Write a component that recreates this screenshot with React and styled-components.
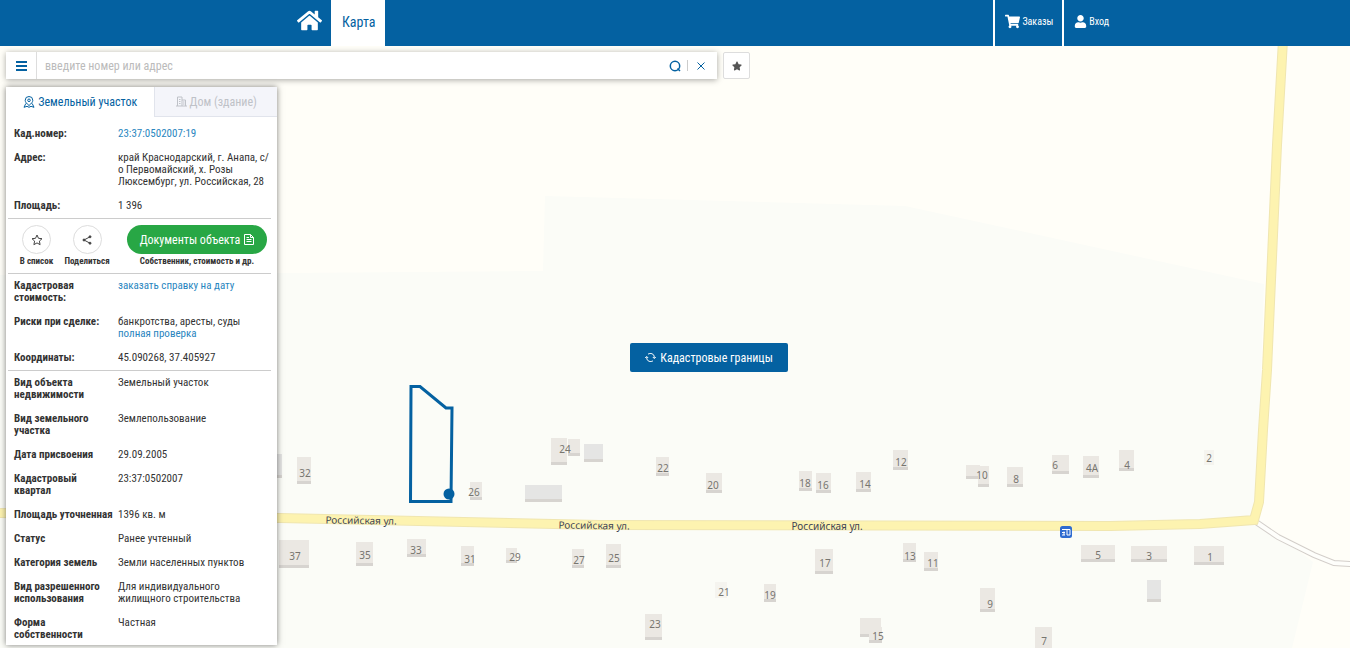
import React from "react";
import styled, { createGlobalStyle } from "styled-components";
import { FaHome, FaShoppingCart, FaUser, FaStar } from "react-icons/fa";

const blue = "#0461a1";
const linkBlue = "#2a86c0";

const GlobalStyle = createGlobalStyle`
  *, *::before, *::after {
    box-sizing: border-box;
  }

  html, body, #root {
    height: 100%;
  }

  body {
    margin: 0;
    overflow: hidden;
    font-family: "Roboto Condensed", "Liberation Sans Narrow", Roboto, sans-serif;
    font-size: 11px;
    line-height: 12px;
    color: #333;
  }

  button, input {
    font: inherit;
  }
`;

const Page = styled.div`
  display: flex;
  flex-direction: column;
  height: 100%;
`;

const Header = styled.header`
  background: ${blue};
`;

const HeaderInner = styled.div`
  display: flex;
  justify-content: space-between;
  height: 46px;
  max-width: 886px;
  margin: 0 auto;
`;

const Nav = styled.nav`
  display: flex;
`;

const HomeLink = styled.a`
  display: flex;
  align-items: center;
  padding: 0 9px 5px 65px;
  color: #fff;
`;

const NavLink = styled.a`
  display: flex;
  align-items: center;
  padding: 0 10px 2px 11px;
  background: #fff;
  color: ${blue};
  font-size: 14px;
  text-decoration: none;
`;

const UserLink = styled.a`
  display: flex;
  align-items: center;
  gap: 2px;
  padding: 0 9px 3px 10px;
  border-left: 2px solid #fff;
  color: #fff;
  font-size: 10px;
  text-decoration: none;
`;

const Main = styled.main`
  position: relative;
  flex: 1;
  min-height: 0;
  padding: 6px;
  background: #fbfcf7;
`;

const MapSvg = styled.svg`
  position: absolute;
  top: 0;
  left: 0;
  width: 100%;
  height: 100%;
  font-family: "Noto Sans", sans-serif;
`;

const SearchRow = styled.div`
  position: relative;
  display: flex;
  gap: 6px;
`;

const SearchForm = styled.form`
  display: flex;
  align-items: center;
  width: 711px;
  height: 27px;
  padding-right: 4px;
  background: #fff;
  box-shadow: 0 1px 6px rgba(0, 0, 0, 0.35);
`;

const SearchInput = styled.input`
  flex: 1;
  min-width: 0;
  height: 100%;
  padding: 0 8px;
  border: 0;
  border-left: 1px solid #ddd;
  outline: 0;
  font-size: 12px;

  &::placeholder {
    color: #bbb;
  }
`;

const IconButton = styled.button`
  display: flex;
  align-items: center;
  justify-content: center;
  width: ${(props) => props.$width || 25}px;
  height: 27px;
  padding: 0;
  border: 0;
  background: #fff;
  color: ${blue};
`;

const Divider = styled.span`
  width: 1px;
  height: 11px;
  background: #ccc;
`;

const FavButton = styled(IconButton)`
  border: 1px solid #ddd;
  border-radius: 2px;
  color: #555;
`;

const Panel = styled.section`
  position: relative;
  width: 271px;
  margin-top: 8px;
  background: #fff;
  box-shadow: 0 0 6px rgba(0, 0, 0, 0.5);
`;

const Tabs = styled.div`
  display: flex;
`;

const Tab = styled.button`
  display: flex;
  align-items: center;
  justify-content: center;
  gap: 3px;
  flex: ${(props) => (props.$active ? "149 1 0" : "122 1 0")};
  height: 30px;
  padding: 0;
  border: 0 solid #e1e4ec;
  border-width: ${(props) => (props.$active ? "0" : "0 0 1px 1px")};
  background: ${(props) => (props.$active ? "#fff" : "#f4f5fa")};
  color: ${(props) => (props.$active ? blue : "#bfc2c8")};
  font-size: 12px;
`;

const PanelBody = styled.div`
  padding: 5px 6px 0 2px;
`;

const Table = styled.table`
  width: 100%;
  border-collapse: collapse;
  table-layout: fixed;

  & + & {
    border-top: 1px solid #ccc;
  }

  &:last-child tr:last-child > * {
    padding-bottom: 4px;
  }
`;

const Label = styled.th`
  width: 110px;
  padding: 6px 4px 6px 6px;
  font-weight: 700;
  text-align: left;
  vertical-align: top;
`;

const Value = styled.td`
  padding: 6px 0;
  vertical-align: top;
`;

const TextLink = styled.a`
  color: ${linkBlue};
  text-decoration: none;
`;

const Actions = styled.div`
  display: flex;
  padding: 6px 4px 6px 6px;
  border: solid #ccc;
  border-width: 1px 0;
`;

const Action = styled.div`
  display: flex;
  flex-direction: column;
  align-items: center;
  flex: 0 0 ${(props) => props.$width}px;
  font-size: 9px;
  font-weight: 700;
  white-space: nowrap;

  &:last-child {
    margin-left: auto;
  }
`;

const RoundButton = styled.button`
  display: flex;
  align-items: center;
  justify-content: center;
  width: 29px;
  height: 29px;
  margin-bottom: 1px;
  padding: 0;
  border: 1px solid #ddd;
  border-radius: 50%;
  background: #fff;
  color: #444;
`;

const DocsButton = styled.button`
  display: flex;
  align-items: center;
  justify-content: center;
  gap: 4px;
  width: 140px;
  height: 29px;
  margin-bottom: 1px;
  padding: 0;
  border: 0;
  border-radius: 15px;
  background: #28a745;
  color: #fff;
  font-size: 12px;
  font-weight: 400;
`;

const BordersButton = styled.button`
  position: absolute;
  top: 297px;
  left: 630px;
  display: flex;
  align-items: center;
  justify-content: center;
  gap: 4px;
  width: 158px;
  height: 29px;
  padding: 0;
  border: 0;
  border-radius: 2px;
  background: ${blue};
  color: #fff;
  font-size: 12px;
`;

const mainRows = [
  ["Кад.номер:", <TextLink href="#number">23:37:0502007:19</TextLink>],
  ["Адрес:", <>край Краснодарский, г. Анапа, с/<wbr />о Первомайский, х. Розы Люксембург, ул. Российская, 28</>],
  ["Площадь:", "1 396"],
];

const priceRows = [
  ["Кадастровая стоимость:", <TextLink href="#price">заказать справку на дату</TextLink>],
  ["Риски при сделке:", <>банкротства, аресты, суды<br /><TextLink href="#check">полная проверка</TextLink></>],
  ["Координаты:", "45.090268, 37.405927"],
];

const detailRows = [
  ["Вид объекта недвижимости", "Земельный участок"],
  ["Вид земельного участка", "Землепользование"],
  ["Дата присвоения", "29.09.2005"],
  ["Кадастровый квартал", "23:37:0502007"],
  ["Площадь уточненная", "1396 кв. м"],
  ["Статус", "Ранее учтенный"],
  ["Категория земель", "Земли населенных пунктов"],
  ["Вид разрешенного использования", "Для индивидуального жилищного строительства"],
  ["Форма собственности", "Частная"],
];

// x, y, width, height, gray
const houses = [
  [270, 454, 12, 24, true], [297, 457, 14, 27], [470, 482, 12, 18],
  [568, 439, 12, 17], [551, 438, 16, 27], [584, 444, 19, 18, true], [525, 485, 37, 17, true],
  [656, 457, 13, 19], [706, 473, 16, 20], [799, 471, 13, 20], [816, 473, 15, 20],
  [856, 472, 15, 20], [893, 450, 15, 20], [966, 465, 14, 14], [978, 466, 11, 21],
  [1007, 467, 16, 20], [1052, 455, 17, 19], [1083, 456, 16, 22], [1119, 450, 15, 21],
  [279, 540, 30, 28], [356, 542, 17, 24], [407, 539, 19, 18], [461, 546, 13, 20],
  [506, 548, 11, 15], [572, 549, 12, 19], [606, 544, 15, 24], [815, 549, 18, 25],
  [903, 543, 13, 19], [924, 552, 14, 19], [1081, 545, 34, 17], [1131, 546, 36, 16],
  [1194, 546, 30, 19], [1147, 580, 14, 22, true], [764, 584, 12, 18], [645, 614, 17, 26],
  [860, 618, 21, 19], [869, 627, 13, 16], [980, 588, 15, 24], [1035, 627, 17, 28],
];

const numbers = [
  ["32", 305, 473], ["26", 474, 492], ["24", 565, 449], ["22", 663, 468], ["20", 713, 485],
  ["18", 805, 483], ["16", 823, 485], ["14", 865, 484], ["12", 901, 462], ["10", 982, 475],
  ["8", 1016, 479], ["6", 1055, 465], ["4А", 1092, 468], ["4", 1127, 465], ["2", 1209, 458],
  ["37", 295, 556], ["35", 365, 555], ["33", 416, 550], ["31", 470, 559], ["29", 515, 557],
  ["27", 579, 560], ["25", 614, 558], ["17", 825, 563], ["13", 910, 556], ["11", 933, 563],
  ["5", 1098, 555], ["3", 1149, 556], ["1", 1210, 557], ["21", 724, 592], ["19", 770, 595],
  ["23", 655, 624], ["15", 878, 636], ["9", 990, 604], ["7", 1044, 641],
];

const streets = [
  [361, 524, 1], [594, 529, 1], [827, 530, 0],
];

const road = "M0 513 L280 518 L600 525 L1110 526 L1200 524 L1254 520 L1259 502 L1263 430 L1267 370 L1277 145 L1283 40";
const sideRoad = "M1256 522 L1278 537 L1314 555 L1334 563 L1352 564";

function Map() {
  return (
    <MapSvg viewBox="0 46 1350 602" preserveAspectRatio="xMinYMin slice" aria-label="Карта">
      <rect y="46" width="1350" height="602" fill="#fffef8" />
      <path d="M0 275 L543 271 L545 196 L905 206 L1264 284 L1256 517 L1313 562 L1292 648 H0Z" fill="#fbfcf7" />
      <path d={sideRoad} fill="none" stroke="#d3ceca" strokeWidth="6" />
      <path d={sideRoad} fill="none" stroke="#fefefb" strokeWidth="4" />
      <path d={road} fill="none" stroke="#f0e6b0" strokeWidth="10" />
      <path d={road} fill="none" stroke="#fdf3b0" strokeWidth="8" />
      <rect x="715" y="582" width="12" height="16" fill="#f5f4ef" />
      <rect x="1204" y="450" width="10" height="15" fill="#f5f4ef" />
      {houses.map(([x, y, w, h, gray]) => (
        <g key={`${x}-${y}`}>
          <rect x={x} y={y} width={w} height={h} fill="#d7d4d0" />
          <rect x={x} y={y} width={w} height={h - 3} fill={gray ? "#e5e5e4" : "#ebe8e3"} />
        </g>
      ))}
      {numbers.map(([text, x, y]) => (
        <text key={text} x={x} y={y + 4} fontSize="10" textAnchor="middle" fill="#77756f">{text}</text>
      ))}
      {streets.map(([x, y, angle]) => (
        <text key={x} x={x} y={y} fontSize="10" textAnchor="middle" fill="#414454" transform={`rotate(${angle} ${x} ${y})`}>
          Российская ул.
        </text>
      ))}
      <path d="M411 386.500 H420 L446 408 H452 L451 501.500 H410.500Z" fill="none" stroke={blue} strokeWidth="3" />
      <circle cx="449" cy="494" r="5.500" fill={blue} />
      <rect x="1060" y="526" width="12" height="12" rx="2.500" fill="#2f6bd0" />
      <path d="M1062 529.500 H1070 M1064 531.500 V535 M1062 532.500 H1065 M1062 535 H1065 M1067 529.500 V535 H1070 V529.500" fill="none" stroke="#fff" />
    </MapSvg>
  );
}

function PlotIcon() {
  return (
    <svg width="12" height="12" viewBox="0 0 12 12" fill="none" stroke="currentColor">
      <path d="M6 9.500 C3.500 7.500 2.200 6 2.200 4.300 A3.800 3.800 0 0 1 9.800 4.300 C9.800 6 8.500 7.500 6 9.500Z" />
      <circle cx="6" cy="4.300" r="1.300" />
      <path d="M2.800 7.500 L1 11.300 L4 10.300 L6 11.300 L8 10.300 L11 11.300 L9.200 7.500" />
    </svg>
  );
}

function BuildingIcon() {
  return (
    <svg width="11" height="11" viewBox="0 0 11 11" fill="none" stroke="currentColor">
      <path d="M1.500 10 V1 H6 V10 M6 4 H9.500 V10 M0 10 H11 M3 3.500 H4.500 M3 5.500 H4.500 M3 7.500 H4.500 M7 6 H8.500 M7 8 H8.500" />
    </svg>
  );
}

function SearchIcon() {
  return (
    <svg width="12" height="12" viewBox="0 0 12 12" fill="none" stroke="currentColor" strokeWidth="1.500">
      <circle cx="6" cy="6" r="4.700" />
      <path d="M8.500 8.500 L11 11" />
    </svg>
  );
}

function DocIcon() {
  return (
    <svg width="10" height="11" viewBox="0 0 10 11" fill="none" stroke="currentColor">
      <path d="M0.500 0.500 H6.500 L9.500 3.500 V10.500 H0.500Z M6.500 0.500 V3.500 H9.500 M2.500 3.500 H5 M2.500 5.500 H7.500 M2.500 7.500 H7.500" />
    </svg>
  );
}

function RefreshIcon() {
  return (
    <svg width="11" height="11" viewBox="0 0 11 11" fill="none" stroke="currentColor">
      <path d="M3 2.200 C5 0.800 9.300 1.200 9.300 5.500 V6.200 M7.800 5 L9.300 6.500 L10.800 5 M8 8.800 C6 10.200 1.700 9.800 1.700 5.500 V4.800 M0.200 6 L1.700 4.500 L3.200 6" />
    </svg>
  );
}

function ShareIcon() {
  return (
    <svg width="10" height="10" viewBox="0 0 10 10" fill="currentColor" stroke="currentColor">
      <path d="M8 1.800 L2 5 L8 8.200" fill="none" />
      <circle cx="8" cy="1.800" r="1" />
      <circle cx="2" cy="5" r="1" />
      <circle cx="8" cy="8.200" r="1" />
    </svg>
  );
}

function StarIcon() {
  return (
    <svg width="12" height="12" viewBox="0 0 12 12" fill="none" stroke="currentColor" strokeLinejoin="round">
      <path d="M6 1 L7.500 4.300 L11 4.700 L8.400 7.100 L9.100 10.700 L6 8.900 L2.900 10.700 L3.600 7.100 L1 4.700 L4.500 4.300Z" />
    </svg>
  );
}

function InfoTable(props) {
  return (
    <Table>
      <tbody>
        {props.rows.map(([label, value]) => (
          <tr key={label}>
            <Label scope="row">{label}</Label>
            <Value>{value}</Value>
          </tr>
        ))}
      </tbody>
    </Table>
  );
}

function App() {
  return (
    <Page>
      <GlobalStyle />
      <Header>
        <HeaderInner>
          <Nav>
            <HomeLink href="#home" aria-label="Главная"><FaHome size={25} /></HomeLink>
            <NavLink href="#map">Карта</NavLink>
          </Nav>
          <Nav>
            <UserLink href="#orders"><FaShoppingCart size={15} />Заказы</UserLink>
            <UserLink href="#login"><FaUser size={13} />Вход</UserLink>
          </Nav>
        </HeaderInner>
      </Header>
      <Main>
        <Map />
        <SearchRow>
          <SearchForm>
            <IconButton type="button" $width={30} aria-label="Меню">
              <svg width="11" height="10" viewBox="0 0 11 10" stroke="currentColor" strokeWidth="2">
                <path d="M0 1 H11 M0 5 H11 M0 9 H11" />
              </svg>
            </IconButton>
            <SearchInput type="text" placeholder="введите номер или адрес" aria-label="Поиск" />
            <IconButton type="button" aria-label="Найти"><SearchIcon /></IconButton>
            <Divider />
            <IconButton type="button" aria-label="Очистить">
              <svg width="8" height="8" viewBox="0 0 8 8" stroke="currentColor">
                <path d="M0.500 0.500 L7.500 7.500 M7.500 0.500 L0.500 7.500" />
              </svg>
            </IconButton>
          </SearchForm>
          <FavButton type="button" $width={27} aria-label="Избранное"><FaStar size={10} /></FavButton>
        </SearchRow>
        <Panel>
          <Tabs role="tablist">
            <Tab type="button" role="tab" aria-selected="true" $active><PlotIcon />Земельный участок</Tab>
            <Tab type="button" role="tab" aria-selected="false"><BuildingIcon />Дом (здание)</Tab>
          </Tabs>
          <PanelBody>
            <InfoTable rows={mainRows} />
            <Actions>
              <Action $width={45}>
                <RoundButton type="button" aria-label="В список"><StarIcon /></RoundButton>
                В список
              </Action>
              <Action $width={56}>
                <RoundButton type="button" aria-label="Поделиться"><ShareIcon /></RoundButton>
                Поделиться
              </Action>
              <Action $width={140}>
                <DocsButton type="button">Документы объекта<DocIcon /></DocsButton>
                Собственник, стоимость и др.
              </Action>
            </Actions>
            <InfoTable rows={priceRows} />
            <InfoTable rows={detailRows} />
          </PanelBody>
        </Panel>
        <BordersButton type="button"><RefreshIcon />Кадастровые границы</BordersButton>
      </Main>
    </Page>
  );
}

export default App;
